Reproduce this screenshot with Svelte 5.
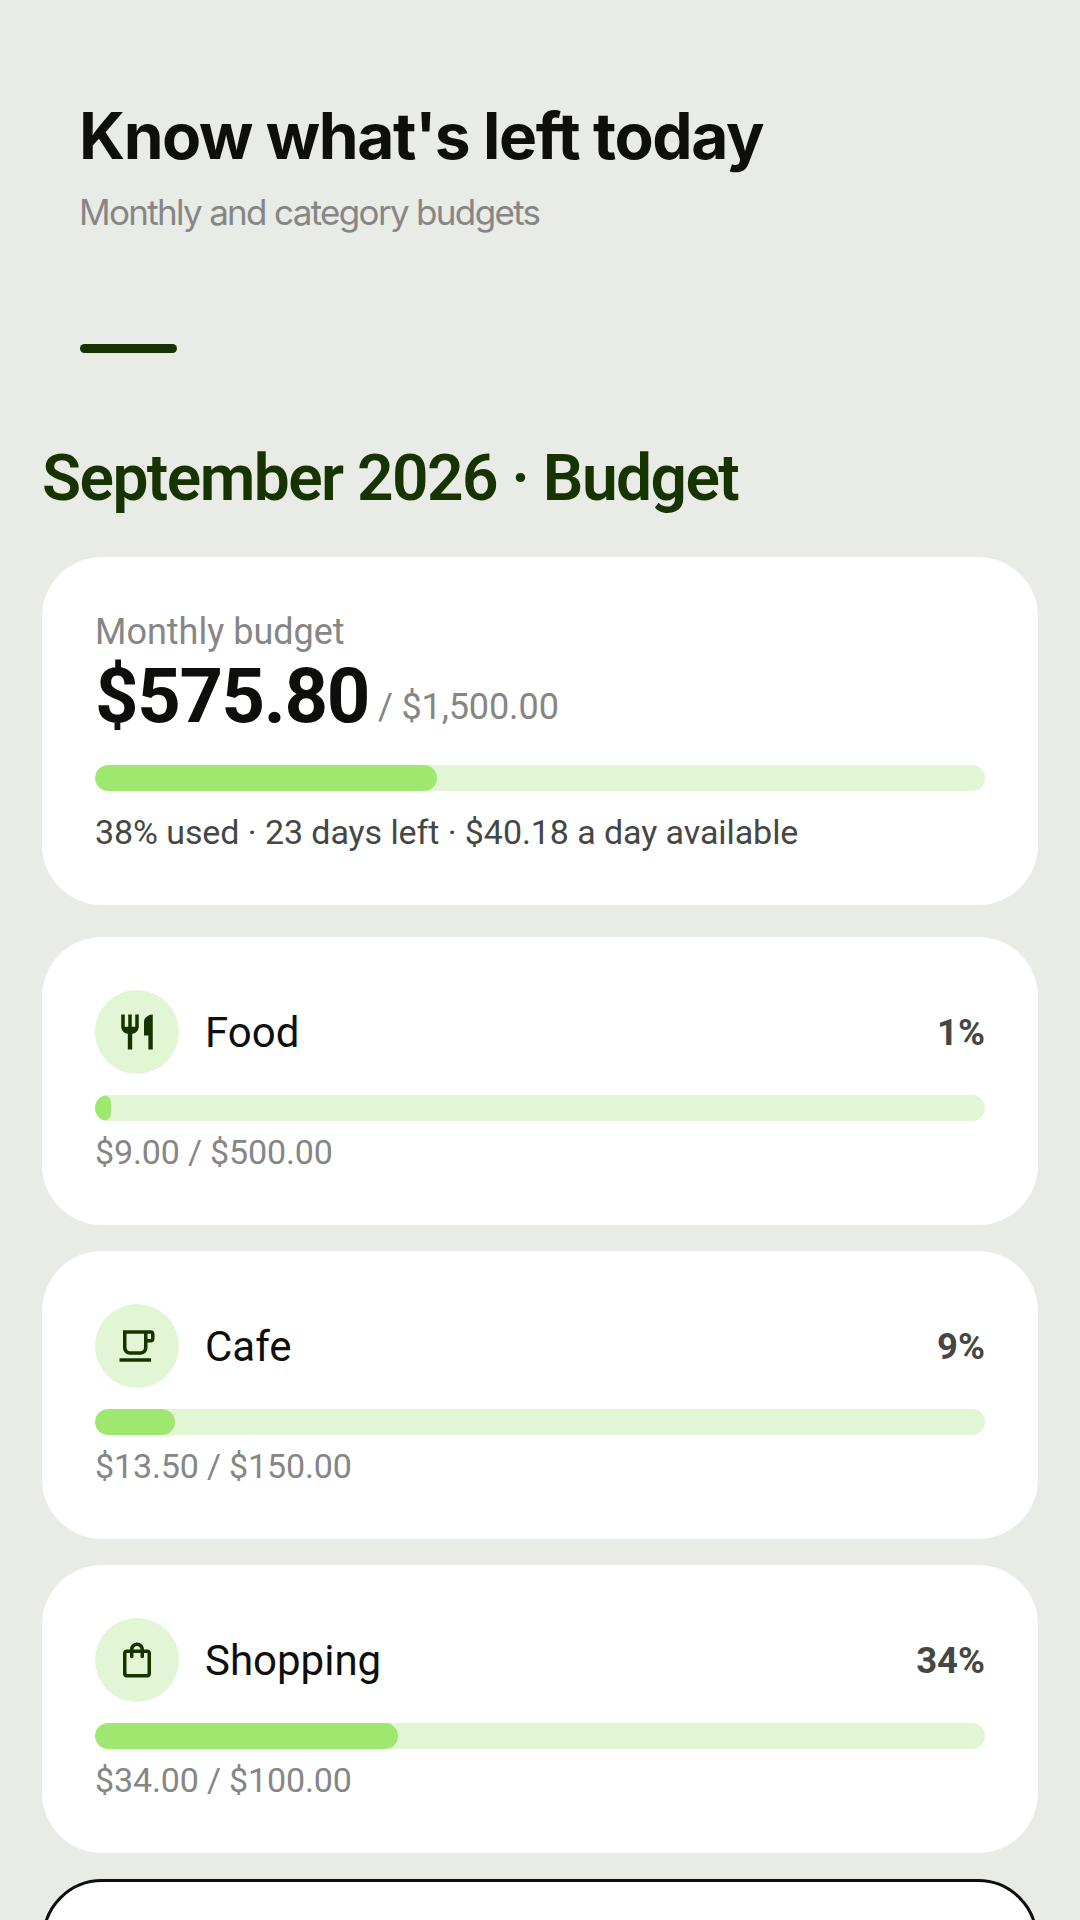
<script>
  const cats = [
    { name: 'Food', pct: 1, w: 1.8, amount: '$9.00 / $500.00', icon: 'food' },
    { name: 'Cafe', pct: 9, w: 9, amount: '$13.50 / $150.00', icon: 'cafe' },
    { name: 'Shopping', pct: 34, w: 34, amount: '$34.00 / $100.00', icon: 'bag' }
  ];
  const paths = {
    food: 'M11 9H9V2H7v7H5V2H3v7c0 2.12 1.66 3.84 3.75 3.97V22h2.5v-9.03C11.34 12.84 13 11.12 13 9V2h-2v7zm5-3v8h2.5v8H21V2c-2.76 0-5 2.24-5 4z',
    cafe: 'M20 3H4v10c0 2.21 1.79 4 4 4h6c2.21 0 4-1.79 4-4v-3h2c1.11 0 2-.89 2-2V5c0-1.11-.89-2-2-2zm-4 10c0 1.1-.9 2-2 2H8c-1.1 0-2-.9-2-2V5h10v8zm4-5h-2V5h2v3zM2 19h18v2H2z',
    bag: 'M18 6h-2c0-2.21-1.79-4-4-4S8 3.79 8 6H6c-1.1 0-2 .9-2 2v12c0 1.1.9 2 2 2h12c1.1 0 2-.9 2-2V8c0-1.1-.9-2-2-2zm-6-2c1.1 0 2 .9 2 2h-4c0-1.1.9-2 2-2zm6 16H6V8h2v2c0 .55.45 1 1 1s1-.45 1-1V8h4v2c0 .55.45 1 1 1s1-.45 1-1V8h2v12z'
  };
</script>

<div class="page">
  <header class="hero">
    <h1>Know what's left today</h1>
    <p class="sub">Monthly and category budgets</p>
    <div class="dash"></div>
  </header>

  <main class="content">
    <h2>September 2026 · Budget</h2>

    <section class="card summary">
      <div class="label">Monthly budget</div>
      <div class="amount"><span class="big">$575.80</span><span class="of">/ $1,500.00</span></div>
      <div class="track"><div class="fill" style="width: 38.4%"></div></div>
      <div class="note">38% used · 23 days left · $40.18 a day available</div>
    </section>

    {#each cats as c}
      <section class="card cat">
        <div class="row">
          <div class="badge">
            <svg viewBox="0 0 24 24" width="42" height="42" aria-hidden="true"><path d={paths[c.icon]} fill="#163300" /></svg>
          </div>
          <span class="name">{c.name}</span>
          <span class="pct">{c.pct}%</span>
        </div>
        <div class="track"><div class="fill" style="width: {c.w}%"></div></div>
        <div class="spent">{c.amount}</div>
      </section>
    {/each}

    <section class="card outlined"></section>
  </main>
</div>

<style>
  :global(body) { margin: 0; background: #e8ebe6; }
  .page {
    height: 1920px;
    overflow: hidden;
    background: #e8ebe6;
    font-family: Roboto, sans-serif;
    color: #0e0f0c;
  }
  .hero { padding: 96px 80px 0; }
  h1 {
    margin: 0 0 0 -1px;
    font-family: Inter, sans-serif;
    font-size: 64px;
    line-height: 80px;
    font-weight: 700;
    letter-spacing: -1.4px;
  }
  .sub {
    margin: 14px 0 0 -1px;
    font-family: Inter, sans-serif;
    font-size: 35px;
    line-height: 44px;
    color: #868685;
    letter-spacing: -1.68px;
  }
  .dash { width: 97px; height: 9px; margin-top: 110px; border-radius: 5px; background: #163300; }
  .content { padding: 0 42px; margin-top: 92px; }
  h2 {
    margin: 0 0 44px;
    font-size: 64px;
    line-height: 68px;
    font-weight: 600;
    letter-spacing: -1.55px;
    color: #163300;
  }
  .card { background: #fff; border-radius: 60px; box-sizing: border-box; padding: 53px; }
  .summary { height: 348px; padding-top: 54px; margin-bottom: 32px; }
  .label { font-size: 36px; line-height: 42px; color: #868685; }
  .amount { display: flex; align-items: flex-start; gap: 9px; }
  .big { font-size: 76px; line-height: 86px; font-weight: 700; letter-spacing: -1.4px; }
  .of { font-size: 36px; line-height: 42px; margin-top: 33px; letter-spacing: -0.1px; color: #868685; }
  .track { height: 26px; border-radius: 13px; background: #e2f5d5; overflow: hidden; }
  .summary .track { margin-top: 26px; }
  .fill { height: 100%; border-radius: 13px; background: #9fe870; }
  .note { margin-top: 21px; font-size: 34px; line-height: 40px; letter-spacing: -0.08px; color: #454745; }
  .cat { height: 288px; margin-bottom: 26px; }
  .row { display: flex; align-items: center; height: 84px; margin-bottom: 21px; }
  .badge {
    width: 84px; height: 84px; border-radius: 50%; background: #e2f5d5;
    display: flex; align-items: center; justify-content: center; margin-right: 26px;
  }
  .name { flex: 1; font-size: 42px; }
  .pct { font-size: 36.5px; font-weight: 700; color: #454745; }
  .spent { margin-top: 11px; font-size: 34px; line-height: 40px; letter-spacing: -0.15px; color: #868685; }
  .outlined { height: 300px; border: 3px solid #0e0f0c; margin-bottom: 0; }
</style>
